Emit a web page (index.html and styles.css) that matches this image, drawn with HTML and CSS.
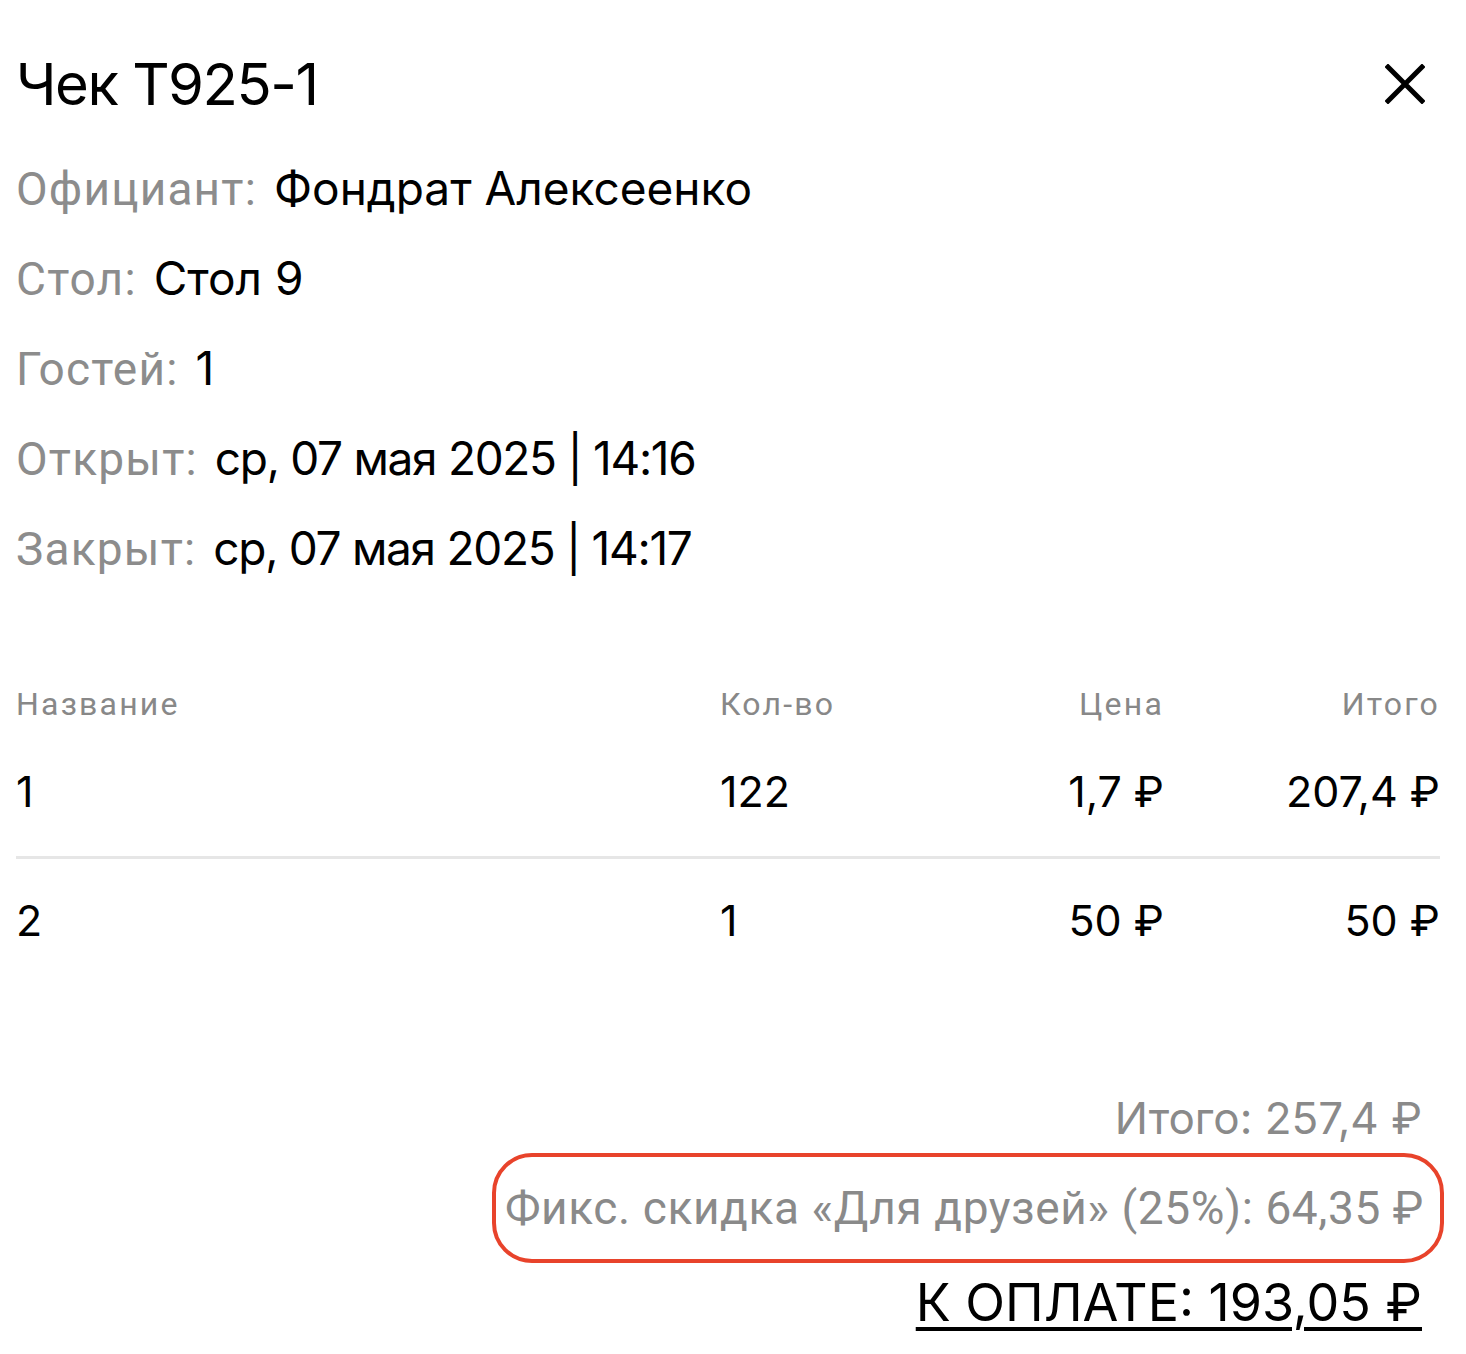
FILE: index.html
```html
<!DOCTYPE html>
<html>

<head>
    <title>Чек T925-1</title>
    <link rel="stylesheet" href="styles.css">
</head>

<body>
    <div class="receipt">
        <div class="receipt-header">
            <h1 class="receipt-title">Чек T925-1</h1>
            <button class="close-btn" type="button" aria-label="Закрыть">
                <svg width="40" height="40" viewBox="0 0 40 40">
                    <path d="M3 3 L37 37 M37 3 L3 37" stroke="#000" stroke-width="5" stroke-linecap="square" fill="none" />
                </svg>
            </button>
        </div>

        <div class="info">
            <div class="info-row"><span class="info-label">Официант:</span> <span class="info-value">Фондрат Алексеенко</span></div>
            <div class="info-row"><span class="info-label">Стол:</span> <span class="info-value">Стол 9</span></div>
            <div class="info-row"><span class="info-label">Гостей:</span> <span class="info-value">1</span></div>
            <div class="info-row"><span class="info-label">Открыт:</span> <span class="info-value date">ср, 07 мая 2025 | 14:16</span></div>
            <div class="info-row"><span class="info-label">Закрыт:</span> <span class="info-value date">ср, 07 мая 2025 | 14:17</span></div>
        </div>

        <table class="items">
            <thead>
                <tr>
                    <th class="col-name">Название</th>
                    <th class="col-count">Кол-во</th>
                    <th class="col-price">Цена</th>
                    <th class="col-total">Итого</th>
                </tr>
            </thead>
            <tbody>
                <tr>
                    <td class="col-name">1</td>
                    <td class="col-count">122</td>
                    <td class="col-price">1,7 ₽</td>
                    <td class="col-total">207,4 ₽</td>
                </tr>
                <tr>
                    <td class="col-name">2</td>
                    <td class="col-count">1</td>
                    <td class="col-price">50 ₽</td>
                    <td class="col-total">50 ₽</td>
                </tr>
            </tbody>
        </table>

        <div class="summary">
            <div class="summary-line">Итого: 257,4 ₽</div>
            <div class="summary-line discount">Фикс. скидка «Для друзей» (25%): 64,35 ₽</div>
            <div class="summary-pay">К ОПЛАТЕ: 193,05 ₽</div>
        </div>
    </div>
</body>

</html>
```

FILE: styles.css
```css
body {
    margin: 0;
    background-color: #fff;
    font-family: Inter, "Noto Sans", sans-serif;
    color: #000;
}

.receipt {
    padding: 34px 26px 30px 16px;
}

.receipt-header {
    display: flex;
    justify-content: space-between;
    align-items: center;
}

.receipt-title {
    margin: 0;
    font-size: 58px;
    font-weight: 400;
    line-height: 100px;
    letter-spacing: -1.5px;
}

.close-btn {
    border: none;
    background: none;
    padding: 0;
    margin-right: 15px;
    cursor: pointer;
    display: flex;
}

.info {
    margin-top: 10px;
}

.info-row {
    font-size: 46px;
    line-height: 89px;
}

.info-label {
    font-family: Roboto, sans-serif;
    color: #8c8c8c;
    letter-spacing: 1.2px;
    margin-right: 4px;
}

.date {
    letter-spacing: -1.3px;
}

.items {
    width: 100%;
    border-collapse: collapse;
    margin-top: 92px;
}

.items th {
    font-family: Roboto, sans-serif;
    font-weight: 400;
    font-size: 32px;
    line-height: 36px;
    letter-spacing: 2.2px;
    color: #888;
    padding: 0 0 6px 0;
}

.items td {
    font-size: 43px;
    line-height: 50px;
    padding: 38px 0 40px;
}

.items tbody tr + tr td {
    border-top: 3px solid #e6e6e6;
    padding-top: 36px;
}

.col-name {
    text-align: left;
    width: 704px;
}

.col-count {
    text-align: left;
}

.col-price,
.col-total {
    text-align: right;
}

.col-total {
    width: 276px;
}

.summary {
    display: flex;
    flex-direction: column;
    align-items: flex-end;
    margin-top: 101px;
}

.summary-line {
    font-size: 44px;
    color: #8a8a8a;
    line-height: 64px;
    padding-right: 18px;
}

.discount {
    font-family: Roboto, sans-serif;
    font-size: 46px;
    letter-spacing: 0.6px;
    border: 4px solid #e8432b;
    border-radius: 40px;
    margin-top: 3px;
    padding: 19px 16px 19px 9px;
    margin-right: -4px;
}

.summary-pay {
    font-size: 52px;
    line-height: 80px;
    text-decoration: underline;
    text-decoration-thickness: 4px;
    text-underline-offset: 6px;
    padding-right: 18px;
}
```
